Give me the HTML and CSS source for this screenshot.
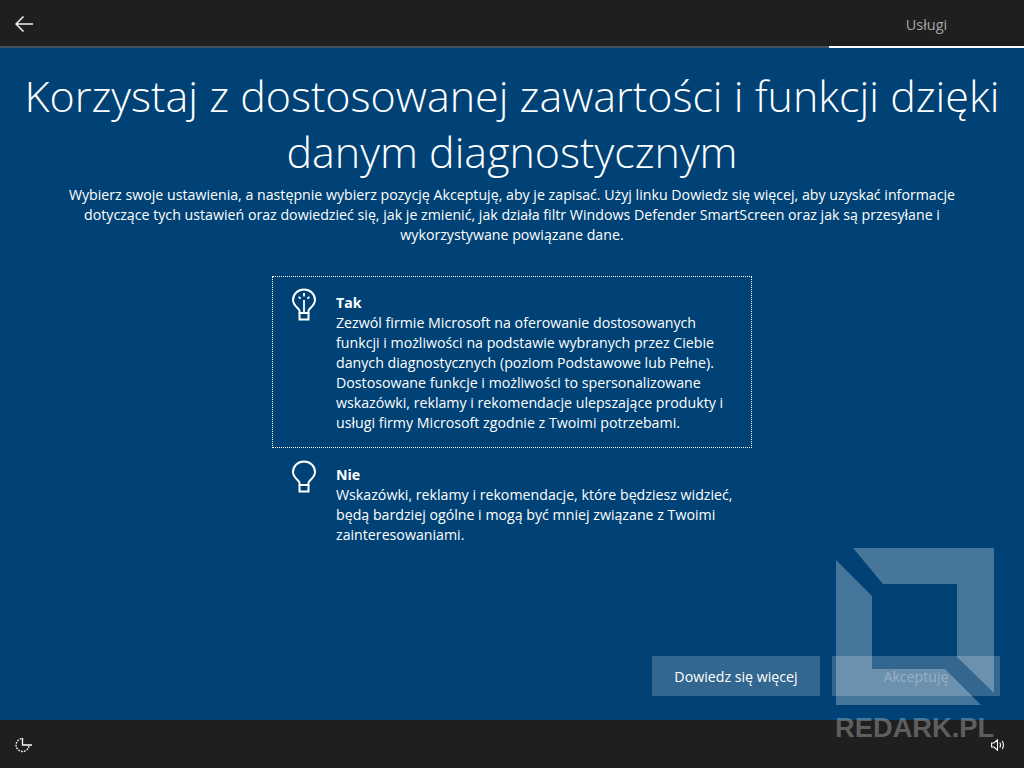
FILE: index.html
```
<!DOCTYPE html>
<html lang="pl">
<head>
<meta charset="utf-8">
<title>Usługi</title>
<link rel="stylesheet" href="styles.css">
</head>
<body>
<div class="screen">
  <header class="topbar">
    <button class="icon-btn" aria-label="Wstecz">
      <svg width="18" height="16" viewBox="0 0 18 16"><path d="M8.500 .5 1 8l7.500 7.500M1 8H18" fill="none" stroke="#f2f2f2" stroke-width="1.500"/></svg>
    </button>
    <div class="tab">Usługi</div>
  </header>
  <main class="content">
    <h1 class="title">Korzystaj z dostosowanej zawartości i funkcji dzięki<br>danym diagnostycznym</h1>
    <p class="intro">Wybierz swoje ustawienia, a następnie wybierz pozycję Akceptuję, aby je zapisać. Użyj linku Dowiedz się więcej, aby uzyskać informacje<br>dotyczące tych ustawień oraz dowiedzieć się, jak je zmienić, jak działa filtr Windows Defender SmartScreen oraz jak są przesyłane i<br>wykorzystywane powiązane dane.</p>
    <div class="options">
      <div class="option selected">
        <svg class="bulb" width="26" height="34" viewBox="0 0 26 34"><g fill="none" stroke="#fff" stroke-width="2"><path d="M8.500 25v-2.500C7.500 20 2 17.500 2 12 2 6 7 1.500 13 1.500S24 6 24 12c0 5.500-5.500 8-6.500 10.500V25z"/><path d="M8.500 25v6.500h9V25" stroke-width="2"/><path d="M13 12v13M7.500 9l2.200 1.600M18.500 9l-2.200 1.600M13 5v3.500" stroke-width="1.800"/></g></svg>
        <div class="option-text">
          <div class="option-name">Tak</div>
          <div>Zezwól firmie Microsoft na oferowanie dostosowanych<br>funkcji i możliwości na podstawie wybranych przez Ciebie<br>danych diagnostycznych (poziom Podstawowe lub Pełne).<br>Dostosowane funkcje i możliwości to spersonalizowane<br>wskazówki, reklamy i rekomendacje ulepszające produkty i<br>usługi firmy Microsoft zgodnie z Twoimi potrzebami.</div>
        </div>
      </div>
      <div class="option">
        <svg class="bulb" width="26" height="34" viewBox="0 0 26 34"><g fill="none" stroke="#fff" stroke-width="2"><path d="M8.500 25v-2.500C7.500 20 2 17.500 2 12 2 6 7 1.500 13 1.500S24 6 24 12c0 5.500-5.500 8-6.500 10.500V25z"/><path d="M8.500 25v6.500h9V25" stroke-width="2"/></g></svg>
        <div class="option-text">
          <div class="option-name">Nie</div>
          <div>Wskazówki, reklamy i rekomendacje, które będziesz widzieć,<br>będą bardziej ogólne i mogą być mniej związane z Twoimi<br>zainteresowaniami.</div>
        </div>
      </div>
    </div>
    <div class="actions">
      <button class="btn">Dowiedz się więcej</button>
      <button class="btn disabled">Akceptuję</button>
    </div>
  </main>
  <footer class="bottombar">
    <svg width="18" height="18" viewBox="0 0 18 18"><g fill="none" stroke="#fff" stroke-width="1.300"><path d="M6.500 2.600A6.500 6.500 0 1 0 14 9.800" stroke-dasharray="1.800 1.100"/><path d="M7.500 2V9H17"/></g></svg>
    <svg width="14" height="12" viewBox="0 0 14 12"><g fill="none" stroke="#fff" stroke-width="1.100"><path d="M.6 4v4h2.400l3.500 3.200V.8L3 4z"/><path d="M8.800 3.500c.8 1.500.8 3.500 0 5M11.300 2c1.400 2.500 1.400 5.500 0 8"/></g></svg>
  </footer>
  <div class="watermark" aria-hidden="true">
    <svg width="160" height="160" viewBox="836 548 160 160"><path fill="#fff" fill-opacity=".28" d="M853 548H994V693L957 657V584H883ZM836 560 872 596V669H945L981 705H836Z"/></svg>
    <div class="watermark-text">REDARK.PL</div>
  </div>
</div>
</body>
</html>
```
FILE: styles.css
```
* { box-sizing: border-box; }
html, body { margin: 0; height: 100%; }
body { font-family: "Open Sans", "Liberation Sans", sans-serif; color: #fff; background: #004275; }
.screen { width: 1024px; height: 768px; display: flex; flex-direction: column; position: relative; overflow: hidden; }
.topbar { height: 48px; flex: none; background: #1f1f1f; border-bottom: 2px solid #46535f; display: flex; justify-content: space-between; }
.icon-btn { width: 48px; height: 48px; padding: 0; background: none; border: 0; display: flex; align-items: center; justify-content: center; }
.tab { width: 195px; height: 48px; margin-bottom: -2px; border-bottom: 2px solid #fff; color: #a6a6a6; font-size: 14.500px; line-height: 50px; text-align: center; }
.content { flex: 1; display: flex; flex-direction: column; align-items: center; padding: 20px 24px 24px; min-height: 0; }
.title { margin: 0; font-weight: 300; font-size: 43px; line-height: 56px; text-align: center; white-space: nowrap; }
.intro { margin: 5px 0 0; font-size: 14.200px; line-height: 20px; text-align: center; white-space: nowrap; }
.options { width: 480px; margin-top: 31px; display: flex; flex-direction: column; }
.option { display: flex; padding: 7px 16px 16px 18px; gap: 19px; height: 172px; }
.option.selected { border: 1px dotted #fff; }
.option:not(.selected) { padding: 8px 16px 0 19px; }
.bulb { flex: none; margin-top: 4px; }
.option-text { margin-top: 9px; font-size: 14.200px; line-height: 20px; white-space: nowrap; }
.option-name { font-weight: 700; }
.actions { margin-top: auto; align-self: flex-end; display: flex; gap: 12px; }
.btn { width: 168px; height: 40px; border: 0; background: rgba(255,255,255,.2); color: #fff; font: 14.200px "Open Sans", "Liberation Sans", sans-serif; padding: 0; }
.btn.disabled { color: rgba(255,255,255,.3); }
.bottombar { height: 48px; flex: none; background: #1f1f1f; display: flex; align-items: center; justify-content: space-between; padding: 2px 19px 0 15px; }
.watermark { position: absolute; left: 836px; top: 548px; width: 160px; pointer-events: none; }
.watermark svg { display: block; }
.watermark-text { position: absolute; top: 163px; left: -1px; font: 700 27.300px/34px "Liberation Sans", sans-serif; color: rgba(255,255,255,.28); white-space: nowrap; }
```
